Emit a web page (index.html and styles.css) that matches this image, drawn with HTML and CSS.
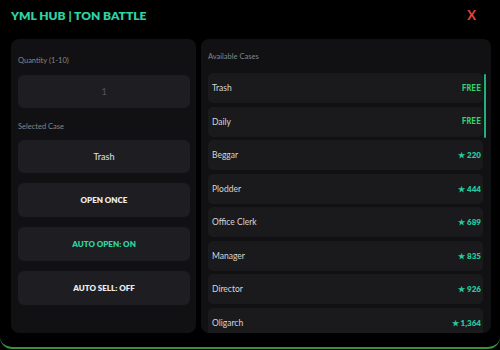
FILE: index.html
```html
<!DOCTYPE html>
<html lang="en">
<head>
  <meta charset="UTF-8" />
  <meta name="viewport" content="width=device-width, initial-scale=1.0"/>
  <title>YML HUB | TON BATTLE</title>
  <link rel="stylesheet" href="styles.css">
</head>
<body>
  <div class="app">
    <header class="topbar">
      <h1>YML HUB | TON BATTLE</h1>
      <button class="close-btn">X</button>
    </header>

    <main class="content">
      <!-- Controls -->
      <section class="panel controls">
        <label class="field-label">Quantity (1-10)</label>
        <div class="qty-input">1</div>

        <label class="field-label">Selected Case</label>
        <div class="selected-case">Trash</div>

        <button class="action-btn">OPEN ONCE</button>
        <button class="action-btn on">AUTO OPEN: ON</button>
        <button class="action-btn">AUTO SELL: OFF</button>
      </section>

      <!-- Case list -->
      <section class="panel cases">
        <div class="field-label">Available Cases</div>
        <div class="case-wrap">
          <ul class="case-list">
            <li class="case-item"><span>Trash</span><span class="free">FREE</span></li>
            <li class="case-item"><span>Daily</span><span class="free">FREE</span></li>
            <li class="case-item"><span>Beggar</span><span class="price">&#9733; 220</span></li>
            <li class="case-item"><span>Plodder</span><span class="price">&#9733; 444</span></li>
            <li class="case-item"><span>Office Clerk</span><span class="price">&#9733; 689</span></li>
            <li class="case-item"><span>Manager</span><span class="price">&#9733; 835</span></li>
            <li class="case-item"><span>Director</span><span class="price">&#9733; 926</span></li>
            <li class="case-item"><span>Oligarch</span><span class="price">&#9733; 1,364</span></li>
          </ul>
          <div class="scroll-thumb"></div>
        </div>
      </section>
    </main>
  </div>
</body>
</html>
```

FILE: styles.css
```css
/* Reset and base styles */
* {
  box-sizing: border-box;
  margin: 0;
  padding: 0;
}

body {
  font-family: 'Lato', 'Open Sans', sans-serif;
  background-color: #000;
  color: #ddd;
  overflow: hidden;
}

.app {
  height: 349px;
  border-bottom: 2px solid #37923a;
  border-radius: 0 0 12px 12px;
  display: flex;
  flex-direction: column;
}

/* Header */
.topbar {
  height: 39px;
  display: flex;
  align-items: center;
  justify-content: space-between;
  padding: 0 24px 9px 11px;
}

.topbar h1 {
  font-size: 12px;
  font-weight: 800;
  color: #2fd3a2;
}

.close-btn {
  background: none;
  border: none;
  color: #e8453c;
  font-family: 'Lato', sans-serif;
  font-weight: 700;
  font-size: 13px;
}

/* Main layout */
.content {
  display: flex;
  gap: 5px;
  padding: 0 9px 0 11px;
  height: 294px;
}

.panel {
  background-color: #111114;
  border-radius: 8px;
}

.field-label {
  font-size: 7.5px;
  color: #858589;
}

/* Left panel */
.controls {
  width: 185px;
  display: flex;
  flex-direction: column;
  padding: 17px 6px 0 7px;
}

.qty-input {
  margin-top: 10px;
  height: 33px;
  background-color: #1e1e22;
  border-radius: 6px;
  display: flex;
  align-items: center;
  justify-content: center;
  font-size: 9px;
  color: #55555a;
}

.controls .field-label:nth-of-type(2) {
  margin-top: 14px;
}

.selected-case {
  margin-top: 9px;
  height: 33px;
  background-color: #1e1e22;
  border-radius: 6px;
  display: flex;
  align-items: center;
  justify-content: center;
  font-size: 9px;
  color: #e2e2e2;
}

.action-btn {
  margin-top: 9.5px;
  height: 34.5px;
  background-color: #1e1e22;
  border: none;
  border-radius: 6px;
  font-family: 'Lato', sans-serif;
  font-weight: 800;
  font-size: 8px;
  color: #ececec;
}

.action-btn.on {
  color: #2fd3a2;
}

/* Right panel */
.cases {
  flex: 1;
  display: flex;
  flex-direction: column;
  padding: 13px 5px 0 7px;
}

.case-wrap {
  position: relative;
  margin-top: 12px;
  flex: 1;
  overflow: hidden;
  padding-right: 3px;
}

.case-list {
  list-style: none;
  display: flex;
  flex-direction: column;
  gap: 3.5px;
}

.case-item {
  height: 30px;
  flex-shrink: 0;
  background-color: #1a1a1d;
  border-radius: 5px;
  display: flex;
  align-items: center;
  justify-content: space-between;
  padding: 0 2px 0 4px;
  font-size: 8.5px;
  color: #d6d6d8;
}

.free {
  font-family: 'DejaVu Sans Mono', monospace;
  font-weight: 700;
  font-size: 8px;
  color: #35d06e;
}

.price {
  font-weight: 800;
  font-size: 8px;
  color: #25c99c;
}

/* Scrollbar thumb over the list edge */
.scroll-thumb {
  position: absolute;
  top: 1px;
  right: 0;
  width: 2px;
  height: 64px;
  border-radius: 1px;
  background-color: #22b07f;
}
```
